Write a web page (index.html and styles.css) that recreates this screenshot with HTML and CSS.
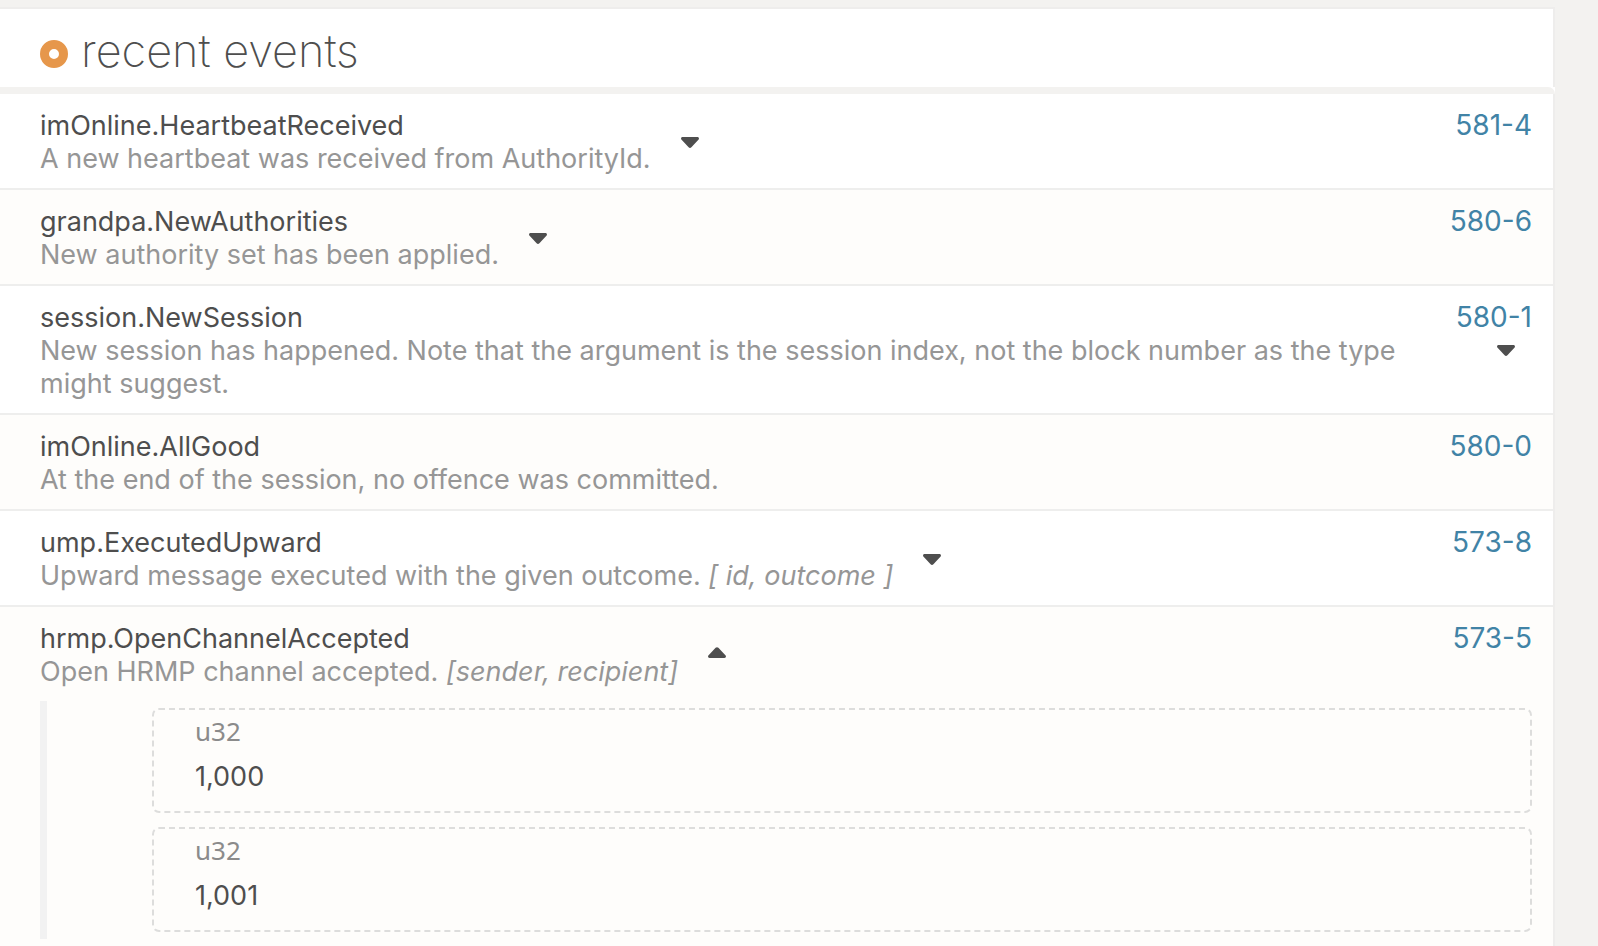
FILE: index.html
```html
<!DOCTYPE html>
<html lang="en">
<head>
<meta charset="utf-8">
<title>recent events</title>
<meta name="viewport" content="width=device-width, initial-scale=1">
<link rel="stylesheet" href="styles.css">
</head>
<body>
<svg width="0" height="0" class="defs" aria-hidden="true">
  <symbol id="caret" viewBox="0 0 18 11"><path d="M1.6 0h14.8c1.5 0 2.1 1.7 1 2.7L10.400 10.200c-.8.9-2 .9-2.800 0L.6 2.700C-.5 1.700.1 0 1.600 0z"/></symbol>
</svg>
<main class="panel">
  <header class="panel-head">
    <span class="ring"></span>
    <h1 class="title">recent events</h1>
  </header>
  <div class="divider"><div class="divider-bar"></div></div>
  <ul class="events">
    <li class="event">
      <div class="summary">
        <div class="text"><div class="name">imOnline.HeartbeatReceived</div><div class="desc">A new heartbeat was received from AuthorityId.</div></div>
        <button class="toggle" type="button" aria-label="Expand"><svg class="caret"><use href="#caret"/></svg></button>
      </div>
      <a class="link" href="#581-4">581-4</a>
    </li>
    <li class="event">
      <div class="summary">
        <div class="text"><div class="name">grandpa.NewAuthorities</div><div class="desc">New authority set has been applied.</div></div>
        <button class="toggle" type="button" aria-label="Expand"><svg class="caret"><use href="#caret"/></svg></button>
      </div>
      <a class="link" href="#580-6">580-6</a>
    </li>
    <li class="event">
      <div class="summary">
        <div class="text"><div class="name">session.NewSession</div><div class="desc">New session has happened. Note that the argument is the session index, not the block number as the type might suggest.</div></div>
        <button class="toggle" type="button" aria-label="Expand"><svg class="caret"><use href="#caret"/></svg></button>
      </div>
      <a class="link" href="#580-1">580-1</a>
    </li>
    <li class="event">
      <div class="summary">
        <div class="text"><div class="name">imOnline.AllGood</div><div class="desc">At the end of the session, no offence was committed.</div></div>
      </div>
      <a class="link" href="#580-0">580-0</a>
    </li>
    <li class="event">
      <div class="summary">
        <div class="text"><div class="name">ump.ExecutedUpward</div><div class="desc">Upward message executed with the given outcome. <em>[ id, outcome ]</em></div></div>
        <button class="toggle" type="button" aria-label="Expand"><svg class="caret"><use href="#caret"/></svg></button>
      </div>
      <a class="link" href="#573-8">573-8</a>
    </li>
    <li class="event">
      <div class="summary">
        <div class="text"><div class="name">hrmp.OpenChannelAccepted</div><div class="desc">Open HRMP channel accepted. <em>[sender, recipient]</em></div></div>
        <button class="toggle toggle-open" type="button" aria-label="Collapse"><svg class="caret"><use href="#caret"/></svg></button>
      </div>
      <a class="link" href="#573-5">573-5</a>
      <dl class="params">
        <div class="param"><dt class="type">u32</dt><dd class="value">1,000</dd></div>
        <div class="param"><dt class="type">u32</dt><dd class="value">1,001</dd></div>
      </dl>
    </li>
  </ul>
</main>
</body>
</html>
```

FILE: styles.css
```css
* {
  box-sizing: border-box;
}

body {
  margin: 0;
  padding: 7px 43px 0 0;
  background: #f3f2f0;
  color: #4e4e4e;
  font-family: Inter, "Liberation Sans", sans-serif;
  font-size: 27px;
  line-height: 33px;
}

.defs {
  position: absolute;
}

.panel-head {
  display: flex;
  align-items: center;
  gap: 13px;
  height: 80px;
  padding: 6px 21px 0 40px;
  background: #fff;
  border-top: 2px solid #eeedec;
  border-right: 2px solid #eeedec;
}

.ring {
  width: 28px;
  height: 28px;
  margin-top: 6px;
  border: 9px solid #e6974b;
  border-radius: 50%;
}

.title {
  margin: 0;
  font-size: 45px;
  font-weight: 200;
  line-height: 60px;
}

.divider {
  background: #fff;
}

.divider-bar {
  height: 7px;
  background: #f3f2f0;
  border-top-right-radius: 7px;
}

.events {
  margin: 0;
  padding: 0;
  list-style: none;
  border-right: 2px solid #eeedec;
}

.event {
  display: grid;
  grid-template-columns: minmax(0, 1fr);
  padding: 15px 21px 13px 40px;
  background: #fff;
  border-bottom: 2px solid #eeeeed;
}

.event:nth-child(even) {
  background: #fefdfb;
}

.summary {
  grid-area: 1 / 1;
  display: flex;
  align-items: center;
  gap: 30px;
  padding-right: 17px;
}

.desc {
  color: #969696;
}

.toggle {
  display: flex;
  flex: none;
  padding: 0;
  border: 0;
  background: none;
  color: #4e4e4e;
  cursor: pointer;
}

.toggle-open {
  padding-bottom: 6px;
}

.caret {
  width: 18px;
  height: 11px;
  fill: currentColor;
}

.toggle-open .caret {
  transform: rotate(180deg);
}

.link {
  grid-area: 1 / 1;
  place-self: start end;
  color: #4183a6;
  font-size: 28px;
  text-decoration: none;
}

.params {
  display: grid;
  gap: 14px;
  margin: 13px 0 0;
  padding: 7px 0 7px 105px;
  border-left: 7px solid #f2f2f2;
}

.param {
  padding: 5px 41px 18px;
  border: 2px dashed #dddddc;
  border-radius: 7px;
}

.type {
  color: #8b8b8b;
  font-family: "Noto Sans", sans-serif;
  font-size: 26px;
}

.value {
  margin: 12px 0 0;
}
```
